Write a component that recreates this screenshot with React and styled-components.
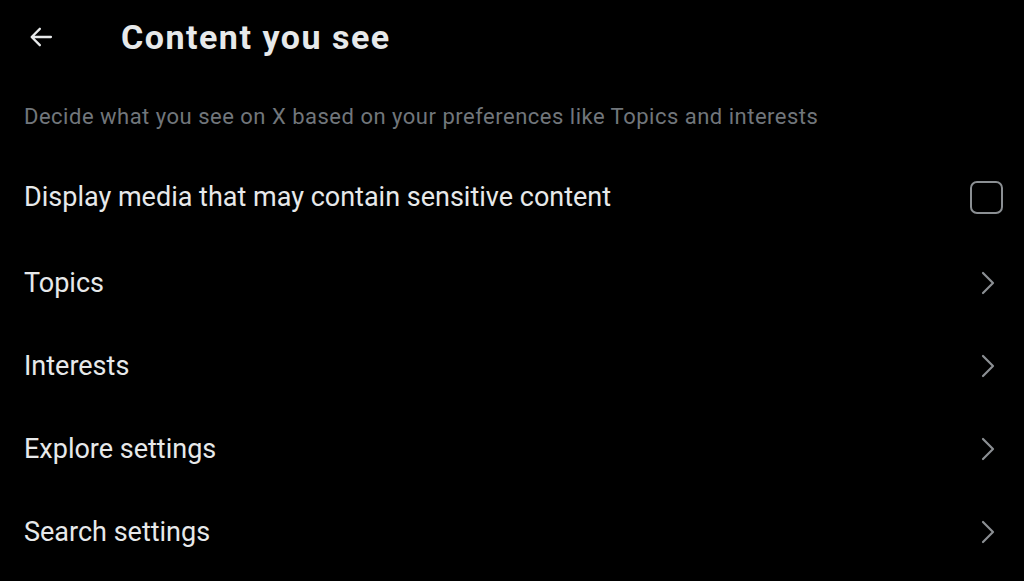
import React from "react";
import styled, { createGlobalStyle } from "styled-components";

const GlobalStyle = createGlobalStyle`
  html, body {
    margin: 0;
    padding: 0;
    background: #000;
  }
  body {
    font-family: Roboto, "Liberation Sans", sans-serif;
  }
`;

const items = ["Topics", "Interests", "Explore settings", "Search settings"];

const App = () => {
  return (
    <Page>
      <GlobalStyle />
      <Header>
        <BackButton aria-label="Back">
          <svg width="28" height="28" viewBox="0 0 24 24" fill="none">
            <path
              d="M20.5 12H4.5M11 5l-7 7 7 7"
              stroke="#e7e9ea"
              strokeWidth="2"
              strokeLinecap="round"
              strokeLinejoin="round"
            />
          </svg>
        </BackButton>
        <Title>Content you see</Title>
      </Header>
      <Subtitle>
        Decide what you see on X based on your preferences like Topics and
        interests
      </Subtitle>
      <CheckRow>
        <RowLabel>Display media that may contain sensitive content</RowLabel>
        <Checkbox />
      </CheckRow>
      {items.map((item) => (
        <LinkRow key={item}>
          <RowLabel>{item}</RowLabel>
          <svg width="16" height="24" viewBox="0 0 16 24" fill="none">
            <path
              d="M3 2l10 10-10 10"
              stroke="#8b8f93"
              strokeWidth="2.2"
              strokeLinecap="round"
              strokeLinejoin="round"
            />
          </svg>
        </LinkRow>
      ))}
    </Page>
  );
};

export default App;

// Styled Components

const Page = styled.div`
  width: 1024px;
  height: 581px;
  background: #000;
  color: #e7e9ea;
  overflow: hidden;
`;

const Header = styled.div`
  display: flex;
  align-items: center;
  height: 74px;
  padding-left: 27px;
`;

const BackButton = styled.div`
  display: flex;
  align-items: center;
  justify-content: center;
  width: 28px;
  height: 28px;
  margin-right: 66px;
`;

const Title = styled.h1`
  margin: 0;
  font-size: 34px;
  font-weight: 700;
  color: #e7e9ea;
  letter-spacing: 1.5px;
`;

const Subtitle = styled.p`
  margin: 0;
  padding: 30px 24px 0;
  font-size: 22px;
  line-height: 26px;
  color: #71767b;
  letter-spacing: 0.5px;
`;

const Row = styled.div`
  display: flex;
  align-items: center;
  justify-content: space-between;
  padding: 0 21px 0 24px;
`;

const CheckRow = styled(Row)`
  height: 88px;
  margin-top: 23px;
`;

const LinkRow = styled(Row)`
  height: 83px;
  padding-right: 28px;
`;

const RowLabel = styled.span`
  font-size: 27px;
  color: #e7e9ea;
`;

const Checkbox = styled.div`
  width: 29px;
  height: 29px;
  border: 2.5px solid #8b8f93;
  border-radius: 7px;
`;
